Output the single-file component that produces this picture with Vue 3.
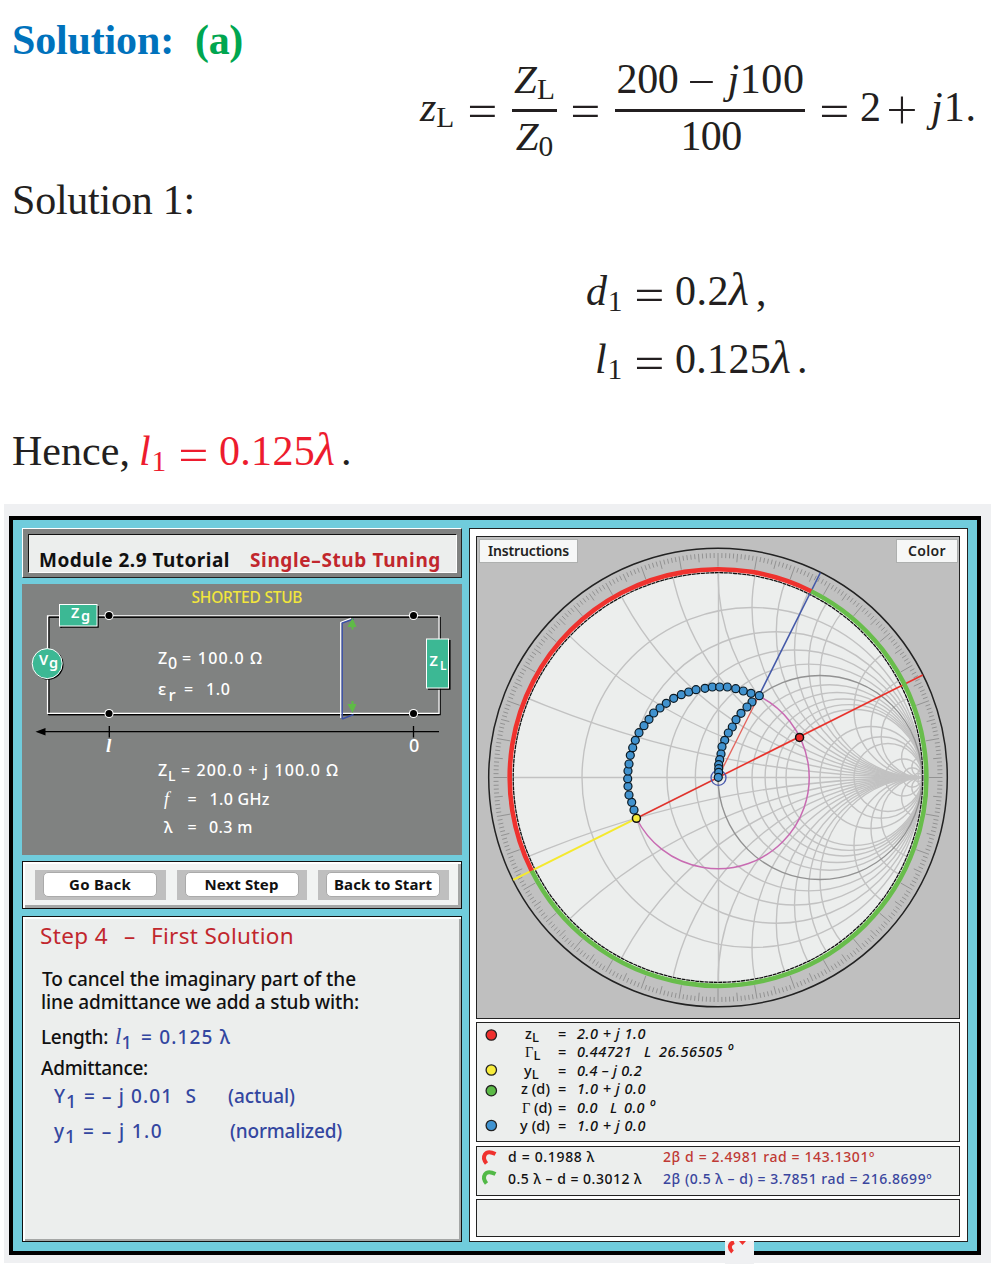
<script setup>
// v-fit="[gap, width]": leading gap in px and the advance width the run is tracked to.
// A third truthy entry reserves the width without tracking the letters.
const vFit = {
  mounted(el, { value: [gap, width, reserve] }) {
    el.style.marginLeft = gap + 'px'
    if (reserve) {
      el.style.width = width + 'px'
      return
    }
    const n = el.textContent.length
    const natural = el.getBoundingClientRect().width
    el.style.letterSpacing = (width - natural) / n + 'px'
  },
}

// Smith chart geometry
const CX = 718, CY = 777.5, R = 204
const steps = [0.2, 0.4, 0.6, 0.8, 1, 1.2, 1.4, 1.6, 1.8, 2, 3, 4, 5, 10, 20, 50]
const resistance = steps.filter(r => r !== 1).map(r => ({ cx: CX + R * r / (1 + r), r: R / (1 + r) }))
const reactance = steps.flatMap(x => [1, -1].map(s => ({ cy: CY - s * R / x, r: R / x })))
const unity = { cx: CX + R / 2, r: R / 2 }

const polar = (radius, deg) => {
  const a = deg * Math.PI / 180
  return [CX + radius * Math.cos(a), CY - radius * Math.sin(a)]
}
const segment = (deg, from, to) => {
  const [x1, y1] = polar(from, deg)
  const [x2, y2] = polar(to, deg)
  return { x1, y1, x2, y2 }
}
const ticks = Array.from({ length: 360 }, (_, d) =>
  segment(d, d % 10 === 0 ? 211 : d % 5 === 0 ? 216 : 219.5, 224.5))

const THETA = 26.565
const GAMMA = 91.2
const P1 = 63.435
const arc = (radius, a, b, large, sweep) => {
  const [x1, y1] = polar(radius, a)
  const [x2, y2] = polar(radius, b)
  return `M${x1} ${y1}A${radius} ${radius} 0 ${large} ${sweep} ${x2} ${y2}`
}
const redArc = arc(208.3, 180 + THETA, P1, 0, 1)
const greenArc = arc(208.3, P1, 180 + THETA, 1, 1)
const load = polar(GAMMA, THETA)
const admittance = polar(GAMMA, 180 + THETA)

const path = [
  [634, 810], [631.7, 802.3], [629, 795], [628, 786.3], [627.7, 778.7], [628, 771], [629, 764], [630.3, 755.3],
  [632.7, 747.7], [635.3, 740.3], [639, 732.7], [644, 725.7], [649, 719.3], [653.7, 713], [660, 708], [666.3, 703.3],
  [673.7, 698.3], [681.3, 694.7], [688.7, 692], [696, 689.7], [705, 688.3], [712.3, 687], [719.7, 687], [727.3, 687],
  [735.7, 688.7], [743.3, 691], [751, 693.3], [752, 702], [747, 707], [741, 713.3], [736, 719.7], [732.3, 727],
  [728.3, 733], [724.7, 740.3], [722, 746.7], [721, 754], [719.7, 759.7], [718.7, 764.7], [718.7, 768.7],
  [718.7, 772.3], [759.3, 695.7], [718.3, 777.3],
]
const nodes = [[109, 615.5], [413.5, 615.5], [109, 713.5], [413.5, 713.5]]
</script>

<template>
  <main class="page">
    <h1 class="line title"><span v-fit="[12, 162]" class="blue">Solution:</span><span v-fit="[21, 48]" class="green">(a)</span></h1>

    <div class="formula">
      <div class="mid line"><span v-fit="[420, 45, true]"><i>z</i><sub>L</sub></span><span v-fit="[0, 34]" class="op">=</span></div>
      <div class="frac first">
        <span class="line"><span><i class="up">Z</i><sub>L</sub></span></span>
        <span class="bar"></span>
        <span class="line"><span><i class="up">Z</i><sub>0</sub></span></span>
      </div>
      <div class="mid line"><span v-fit="[11, 34]" class="op">=</span></div>
      <div class="frac second">
        <span class="line"><span v-fit="[1, 62]">200</span><span v-fit="[7, 30]" class="op minus">−</span><span v-fit="[12, 77]"><i>j</i>100</span></span>
        <span class="bar"></span>
        <span class="line"><span v-fit="[2, 61]">100</span></span>
      </div>
      <div class="mid line"><span v-fit="[12, 34]" class="op">=</span><span v-fit="[9, 22]">2</span><span v-fit="[4, 32]" class="op minus">+</span><span v-fit="[13, 46]"><i>j</i>1.</span></div>
    </div>

    <p class="line s1"><span v-fit="[12, 183]">Solution 1:</span></p>

    <p class="line d1"><span v-fit="[586, 37]"><i>d</i><sub>1</sub></span><span v-fit="[9, 34]" class="op">=</span><span v-fit="[9, 54]">0.2</span><i v-fit="[0, 27]" class="lam">λ</i><span v-fit="[0, 10]">,</span></p>
    <p class="line l1"><span v-fit="[595, 28]"><i>l</i><sub>1</sub></span><span v-fit="[9, 34]" class="op">=</span><span v-fit="[9, 96]">0.125</span><i v-fit="[0, 27]" class="lam">λ</i><span v-fit="[-1, 10]">.</span></p>

    <p class="line hence"><span v-fit="[12, 118]">Hence,</span><span v-fit="[9, 28]" class="red"><i>l</i><sub>1</sub></span><span v-fit="[9, 34]" class="op red">=</span><span v-fit="[9, 96]" class="red">0.125</span><i v-fit="[0, 27]" class="lam red">λ</i><span v-fit="[-1, 10]">.</span></p>

    <section class="shell">
      <div class="frame">
        <div class="left">
          <header class="module">
            <div class="plate"><span v-fit="[10, 191]">Module 2.9 Tutorial</span><span v-fit="[20, 191]" class="crimson">Single–Stub Tuning</span></div>
          </header>

          <svg class="circuit" viewBox="22 584 440 271" width="440" height="271">
            <text x="191.500" y="602.500" textLength="111" fill="#f2e63c" font-size="15.500">SHORTED STUB</text>
            <g fill="none" stroke-width="1.200">
              <path d="M49 714V617.200H438M49 714.700H440.200V617" stroke="#000" />
              <path d="M47.500 713.300V615.800H439V713.300Z" stroke="#fff" />
              <path d="M49 617.100H438M48 714.700H439" stroke="#000" />
            </g>
            <g v-for="([x, y], i) in nodes" :key="i">
              <circle :cx="x" :cy="y" r="4.600" fill="#fff" /><circle :cx="x" :cy="y" r="3.500" fill="#000" />
            </g>
            <path d="M61 628V627H98V606" fill="none" stroke="#000" stroke-width="1.500" />
            <rect x="59.500" y="604.500" width="37.500" height="21.500" fill="#3cb894" stroke="#fff" />
            <circle cx="48.300" cy="664.600" r="15.200" fill="#000" />
            <circle cx="47.200" cy="663.600" r="15" fill="#3cb894" stroke="#fff" />
            <path d="M428 689H449.800V640" fill="none" stroke="#000" stroke-width="1.500" />
            <rect x="426.500" y="639" width="22" height="49" fill="#3cb894" stroke="#fff" />
            <g fill="#fff" font-weight="600" font-size="14.500">
              <text x="71" y="618">Z</text><text x="81" y="621">g</text>
              <text x="39" y="664.500">V</text><text x="49" y="668">g</text>
              <text x="429.500" y="666">Z</text><text x="440" y="669.500" font-size="12">L</text>
            </g>
            <g fill="none" stroke-width="1.400">
              <path d="M340.800 718V622.500L351 618.500" stroke="#fff" />
              <path d="M342.200 719V623L353.500 619M342.200 719L353.500 714.500" stroke="#3b50a8" />
            </g>
            <path d="M352.500 618L356.500 627H353.500V629.500H351.500V627H347.500Z M352.500 713L356.500 704H353.500V701H351.500V704H347.500Z" fill="#5fbb46" />
            <path d="M40 731.700H439M109.300 726V737.500M413.500 726V737.500" stroke="#000" stroke-width="1.300" />
            <path d="M35.500 731.700L45.500 728V735.500Z" fill="#000" />
            <g fill="#fff" font-size="16" font-weight="500">
              <text x="106" y="752" class="serif" font-size="19" font-weight="700">l</text>
              <text x="409" y="752" font-size="18">0</text>
              <text x="158" y="663.500">Z</text><text x="168" y="668.500">0</text>
              <text x="182" y="663.500" textLength="80">= 100.0 Ω</text>
              <text x="158" y="694.500" font-size="17">ε</text><text x="168.500" y="700.500" font-size="17">r</text>
              <text x="184" y="694.500">=</text><text x="206" y="694.500" textLength="24">1.0</text>
              <text x="158" y="776">Z</text><text x="168" y="780.500" font-size="14">L</text>
              <text x="181" y="776" textLength="157">= 200.0 + j 100.0 Ω</text>
              <text x="164" y="804.500" class="serif" font-size="18">f</text>
              <text x="187.500" y="804.500">=</text><text x="209.500" y="804.500" textLength="60">1.0 GHz</text>
              <text x="164" y="833">λ</text><text x="187.500" y="833">=</text><text x="209" y="833" textLength="43.500">0.3 m</text>
            </g>
          </svg>

          <nav class="actions">
            <div class="slot"><button><span v-fit="[0, 62]">Go Back</span></button></div>
            <div class="slot"><button><span v-fit="[0, 74]">Next Step</span></button></div>
            <div class="slot"><button><span v-fit="[0, 98]">Back to Start</span></button></div>
          </nav>

          <article class="step">
            <h2 class="row crimson"><span v-fit="[17, 68]">Step 4</span><span v-fit="[16, 10]">–</span><span v-fit="[17, 143]">First Solution</span></h2>
            <p class="row r1"><span v-fit="[19, 314]">To cancel the imaginary part of the</span></p>
            <p class="row r2"><span v-fit="[18, 318]">line admittance we add a stub with:</span></p>
            <p class="row r3"><span v-fit="[18, 67]">Length:</span><span v-fit="[7, 19, true]" class="navy"><i class="ell">l</i><sub>1</sub></span><span v-fit="[7, 90]" class="navy">= 0.125 λ</span></p>
            <p class="row r4"><span v-fit="[18, 107]">Admittance:</span></p>
            <p class="row r5 navy"><span v-fit="[31, 23]">Y<sub>1</sub></span><span v-fit="[7, 113]">= – j 0.01 &nbsp;S</span><span v-fit="[31, 67]">(actual)</span></p>
            <p class="row r6 navy"><span v-fit="[31, 22]">y<sub>1</sub></span><span v-fit="[7, 80]">= – j 1.0</span><span v-fit="[67, 112]">(normalized)</span></p>
          </article>
        </div>

        <div class="right">
          <div class="chart">
            <svg viewBox="477 537 482 481" width="482" height="481">
              <defs><clipPath id="disc"><circle :cx="CX" :cy="CY" :r="R" /></clipPath></defs>
              <circle :cx="CX" :cy="CY" r="229.300" fill="#c1c1c1" stroke="#222" stroke-width="1.500" />
              <g stroke="#8c8c8c"><line v-for="(t, i) in ticks" :key="i" v-bind="t" stroke-width=".9" /></g>
              <circle :cx="CX" :cy="CY" r="205.500" fill="#eceeed" stroke="#f4f4f4" stroke-width="2.500" />
              <g clip-path="url(#disc)" fill="none" stroke="#c2c2c2" stroke-width="1.400">
                <circle v-for="(c, i) in resistance" :key="'r' + i" :cx="c.cx" :cy="CY" :r="c.r" />
                <circle v-for="(c, i) in reactance" :key="'x' + i" :cx="CX + R" :cy="c.cy" :r="c.r" />
                <path :d="`M${CX - R} ${CY}h${2 * R}M${CX + .5} ${CY - R}v${2 * R}`" />
                <circle :cx="unity.cx" :cy="CY" :r="unity.r" stroke="#929292" />
              </g>
              <circle :cx="CX" :cy="CY" r="204.800" fill="none" stroke="#111" stroke-width="1.300" stroke-dasharray="4 .6" />
              <path :d="arc(GAMMA, P1, 180 + THETA, 1, 1)" fill="none" stroke="#c86bb2" stroke-width="1.500" />
              <line v-bind="segment(P1, 0, GAMMA)" stroke="#e4625a" stroke-width="1.300" />
              <line v-bind="segment(P1, GAMMA, 229)" stroke="#4358a8" stroke-width="1.500" />
              <line v-bind="segment(THETA, 0, 229)" stroke="#e8332c" stroke-width="1.600" />
              <line v-bind="segment(180 + THETA, 0, GAMMA)" stroke="#e0352e" stroke-width="1.700" />
              <line v-bind="segment(180 + THETA, GAMMA, 229)" stroke="#f5e92e" stroke-width="2" />
              <path :d="greenArc" fill="none" stroke="#68bd4b" stroke-width="4.600" />
              <path :d="redArc" fill="none" stroke="#ef322e" stroke-width="4.600" />
              <circle :cx="CX + .5" :cy="CY + .3" r="7.500" fill="none" stroke="#4a5aae" stroke-width="1.300" />
              <circle v-for="([x, y], i) in path" :key="'p' + i" :cx="x" :cy="y" r="4" fill="#4192ce" stroke="#0b1a24" stroke-width="1.200" />
              <circle :cx="load[0]" :cy="load[1] + .7" r="4" fill="#ee2b2b" stroke="#111" stroke-width="1.500" />
              <circle :cx="admittance[0]" :cy="admittance[1]" r="4" fill="#f7ec3a" stroke="#111" stroke-width="1.500" />
            </svg>
            <button class="tab instructions"><span v-fit="[0, 81]">Instructions</span></button>
            <button class="tab color"><span v-fit="[0, 38]">Color</span></button>
          </div>

          <div class="readout">
            <svg width="24" height="117" viewBox="477 1023 24 117" stroke="#222" stroke-width="1.300">
              <circle cx="491.300" cy="1035" r="5.200" fill="#ee2f2d" />
              <circle cx="491.300" cy="1070" r="5.200" fill="#f7ec3c" />
              <circle cx="491.300" cy="1090.700" r="5.200" fill="#5cba47" />
              <circle cx="491.300" cy="1125.500" r="5.200" fill="#3f93d1" />
            </svg>
            <div class="values">
              <p><span v-fit="[24, 33, true]">z<sub>L</sub></span><span v-fit="[0, 19, true]">=</span><em v-fit="[0, 69]">2.0 + j 1.0</em></p>
              <p><span v-fit="[24, 33, true]"><span class="gam">Γ</span><sub>L</sub></span><span v-fit="[0, 19, true]">=</span><em v-fit="[0, 55]">0.44721</em><em v-fit="[12, 7]">L</em><em v-fit="[8, 64]">26.56505</em><em v-fit="[4, 8, true]" class="deg">º</em></p>
              <p><span v-fit="[23, 34, true]">y<sub>L</sub></span><span v-fit="[0, 19, true]">=</span><em v-fit="[0, 65]">0.4 – j 0.2</em></p>
              <p><span v-fit="[20, 29]">z (d)</span><span v-fit="[8, 19, true]">=</span><em v-fit="[0, 69]">1.0 + j 0.0</em></p>
              <p><span v-fit="[21, 30]"><span class="gam">Γ</span> (d)</span><span v-fit="[6, 19, true]">=</span><em v-fit="[0, 21]">0.0</em><em v-fit="[12, 7]">L</em><em v-fit="[7, 21]">0.0</em><em v-fit="[4, 8, true]" class="deg">º</em></p>
              <p><span v-fit="[19, 30]">y (d)</span><span v-fit="[8, 19, true]">=</span><em v-fit="[0, 69]">1.0 + j 0.0</em></p>
            </div>
          </div>

          <div class="angles">
            <svg width="24" height="47" viewBox="477 1147 24 47" fill="none" stroke-width="4">
              <path d="M486.500 1163.500C481.500 1157.500 484.500 1148.500 495.500 1154" stroke="#ef322e" />
              <path d="M486.500 1183.500C481.500 1177.500 484.500 1168.500 495.500 1174" stroke="#52b947" />
            </svg>
            <div>
              <p><span v-fit="[7, 87]">d = 0.1988 λ</span><span v-fit="[68, 212]" class="brick">2β d = 2.4981 rad = 143.1301º</span></p>
              <p><span v-fit="[7, 134]">0.5 λ – d = 0.3012 λ</span><span v-fit="[21, 269]" class="indigo">2β (0.5 λ – d) = 3.7851 rad = 216.8699º</span></p>
            </div>
          </div>

          <div class="blank"></div>
        </div>
      </div>
      <svg class="patch" width="29" height="23" viewBox="725 1241 29 23">
        <path d="M734 1242C728.500 1244 729 1249 732.500 1252" fill="none" stroke="#ef322e" stroke-width="4" />
        <path d="M739 1241H746L742.500 1245Z" fill="#ef322e" />
      </svg>
    </section>
  </main>
</template>

<style>
body { background: #fff; }
</style>

<style scoped>
.page {
  width: 1000px;
  height: 1276px;
  box-sizing: border-box;
  padding-top: 20px;
  overflow: hidden;
  font-family: "Liberation Serif", serif;
  font-size: 42px;
  color: #231f20;
}
p, h1, h2 { margin: 0; font-weight: inherit; }
sub { vertical-align: -6px; line-height: 0; font-size: .7em; }
.line { display: flex; height: 40px; line-height: 40px; white-space: pre; }
.line > * { flex: none; }
.title { height: 39px; font-size: 42px; font-weight: 700; }
.blue { color: #0072bc; }
.green { color: #00a650; }
.red { color: #ed1c2e; }
.op { font-family: Lato, sans-serif; font-weight: 300; font-size: 60px; line-height: 42px; }
.op.minus { font-size: 55px; }
.lam { font-size: 46px; line-height: 38px; }
.up { font-size: 41px; }
.formula { display: flex; }
.mid { margin-top: 28px; }
.frac { display: flex; flex-direction: column; align-items: center; }
.bar { align-self: stretch; height: 3px; margin: 10px 0 4px; background: #231f20; }
.first { width: 45px; margin-left: 13px; }
.second { width: 190px; margin-left: 13px; }
.s1 { margin-top: 24px; }
.d1 { margin-top: 51px; }
.l1 { margin-top: 28px; }
.hence { margin-top: 52px; }

.shell {
  position: relative;
  width: 987px;
  height: 759px;
  margin: 33px 0 0 4px;
  padding: 12px 0 0 5px;
  box-sizing: border-box;
  background: #eff0f2;
  font-family: "Noto Sans", sans-serif;
  font-size: 14.500px;
  font-weight: 500;
  color: #111;
  white-space: pre;
}
.frame {
  display: flex;
  gap: 7px;
  width: 972px;
  height: 739px;
  box-sizing: border-box;
  border: 4px solid #000;
  padding: 8px 9px;
  background: #70ccdc;
}
.left { display: flex; flex-direction: column; width: 440px; }
.module {
  height: 50px;
  box-sizing: border-box;
  padding: 5px 4px 4px 5px;
  border: 1px solid #fff;
  border-right-color: #222;
  border-bottom-color: #222;
  background: #808281;
}
.plate {
  display: flex;
  height: 39px;
  box-sizing: border-box;
  padding-top: 11px;
  border: 1px solid #111;
  border-right-color: #fff;
  border-bottom-color: #fff;
  background: #eceeed;
  font-size: 19px;
  font-weight: 700;
  line-height: 28px;
}
.plate > * { flex: none; }
.crimson { color: #c1272d; }
.circuit { display: block; margin: 6px 0; background: #808281; font-family: "Noto Sans", sans-serif; }
.serif { font-family: "Liberation Serif", serif; font-style: italic; }
.actions {
  display: flex;
  gap: 11px;
  height: 48px;
  box-sizing: border-box;
  padding: 8px 0 0 12px;
  border: 1.500px solid #111;
  box-shadow: inset 2px 2px 0 #fff, inset -3px -3px 0 #a5a7a6;
  background: #f1f3f2;
}
.slot { width: 130.500px; height: 30px; box-sizing: border-box; padding: 2px 8px; background: #bfbfbf; }
.slot button {
  display: flex;
  justify-content: center;
  width: 114px;
  height: 25px;
  padding: 0;
  border: 1px solid #aaa;
  border-radius: 5px;
  background: #fff;
  font: 700 15px/22px "Noto Sans", sans-serif;
  color: #111;
}
.step {
  height: 326px;
  margin-top: 7px;
  box-sizing: border-box;
  border: 1px solid #111;
  box-shadow: inset 2px 2px 0 #fff, inset -2px -2px 0 #a5a7a6;
  padding-top: 7px;
  background: #eceeed;
  font-size: 19px;
}
.row { display: flex; height: 24px; line-height: 24px; }
.row > * { flex: none; }
.row sub { font-size: 18px; vertical-align: -5px; }
h2.row { font-size: 22.500px; font-weight: 400; }
.navy { color: #3346a0; }
.ell { font-family: "Liberation Serif", serif; font-size: 23px; line-height: 0; }
.r1 { margin-top: 19px; }
.r2 { margin-top: -1px; }
.r3 { margin-top: 11px; }
.r4 { margin-top: 7px; }
.r5 { margin-top: 4px; }
.r6 { margin-top: 11px; }

.right {
  display: flex;
  flex-direction: column;
  width: 499px;
  height: 714px;
  box-sizing: border-box;
  padding: 7px 0 0 6px;
  border: 1px solid #222;
  background: #fff;
}
.right > div { width: 484px; box-sizing: border-box; border: 1px solid #222; background: #eceeed; }
.right > .chart { position: relative; height: 483px; background: #bfbfbf; }
.chart > svg { display: block; }
.tab {
  position: absolute;
  top: 2px;
  display: flex;
  justify-content: center;
  height: 24px;
  padding: 0;
  border: 1px solid #aeb0af;
  background: #f6f7f7;
  font: 600 14px/22px "Noto Sans", sans-serif;
  color: #222;
}
.instructions { left: 2px; width: 99px; }
.color { right: 1px; width: 62px; }
.readout { display: flex; height: 120px; margin-top: 3px; }
.values { padding-top: 1px; }
.values p { display: flex; height: 18.400px; line-height: 18.400px; }
.values p > * { flex: none; }
.values sub { font-size: 13px; vertical-align: -3px; }
.gam { font-family: "Liberation Serif", serif; line-height: 0; }
.deg { font-size: 17px; }
.angles { display: flex; height: 50px; margin-top: 4px; }
.angles p { display: flex; height: 22px; line-height: 20px; font-size: 14px; }
.angles p > * { flex: none; }
.brick { color: #bf3a35; }
.indigo { color: #3a469e; }
.blank { height: 38px; margin-top: 3px; }
.patch { position: absolute; left: 721px; top: 737px; background: #eff0f2; }
</style>
